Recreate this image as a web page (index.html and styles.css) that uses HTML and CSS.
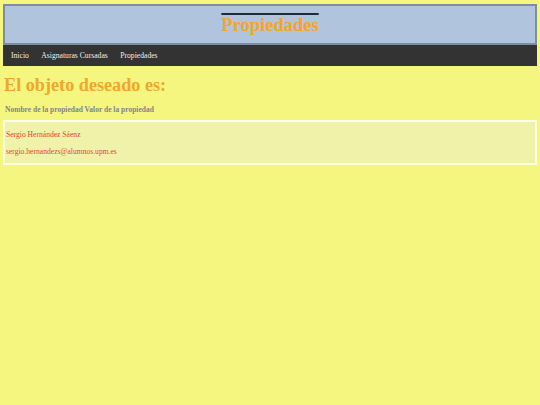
FILE: index.html
```html
<!DOCTYPE html>
<html lang="es">
<head>
<meta charset="utf-8">
<title>Propiedades</title>
<link rel="stylesheet" href="styles.css">
</head>
<body>
<header class="cabecera">
  <h1 class="titulo">Propiedades</h1>
</header>
<nav class="menu">
  <a class="enlace" href="#">Inicio</a>
  <a class="enlace" href="#">Asignaturas Cursadas</a>
  <a class="enlace" href="#">Propiedades</a>
</nav>
<main class="contenido">
  <h2 class="subtitulo">El objeto deseado es:</h2>
  <p class="encabezado">Nombre de la propiedad Valor de la propiedad</p>
  <section class="tarjeta">
    <p class="valor">Sergio Hernández Sáenz</p>
    <p class="valor">sergio.hernandezs@alumnos.upm.es</p>
  </section>
</main>
</body>
</html>
```

FILE: styles.css
```css
html, body {
  margin: 0;
  padding: 0;
  background: #f4f67f;
  font-family: "Liberation Serif", "Times New Roman", serif;
}
body {
  padding: 3px;
}
.cabecera {
  background: #b0c4de;
  border: 2px solid #7c8fa2;
  height: 37px;
  display: flex;
  justify-content: center;
  align-items: flex-end;
  margin: 1px 0 0 0;
}
.titulo {
  margin: 0 0 7px 0;
  font-size: 18.5px;
  font-weight: bold;
  color: #f2a72a;
  text-decoration: overline;
  text-decoration-color: #1f2a3a;
  text-decoration-thickness: 2px;
  line-height: 1.2;
}
.menu {
  background: #333333;
  height: 21px;
  display: flex;
  align-items: center;
  gap: 12.5px;
  padding-left: 8px;
}
.enlace,
.enlace:visited {
  color: #ececec;
  text-decoration: none;
  font-size: 7.65px;
}
.contenido {
  padding: 0;
}
.subtitulo {
  margin: 9px 0 0 1px;
  font-size: 18.2px;
  color: #f2a72a;
  line-height: 1.2;
}
.encabezado {
  margin: 8px 0 0 2px;
  font-size: 7.5px;
  font-weight: bold;
  color: #858585;
}
.tarjeta {
  margin-top: 6px;
  border: 2px solid #fdfde6;
  background: #f0f2a9;
  padding: 8px 2px 4px 1px;
  height: 29px;
}
.valor {
  margin: 0 0 8px 0;
  font-size: 7.6px;
  color: #e2463a;
}
```
